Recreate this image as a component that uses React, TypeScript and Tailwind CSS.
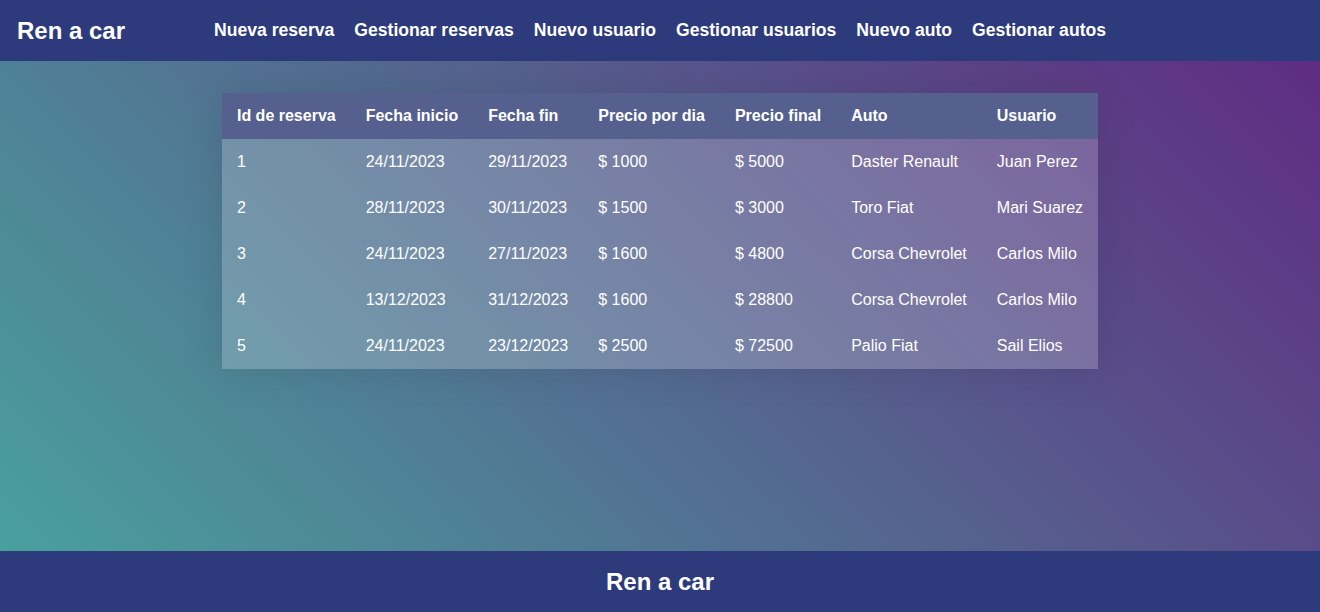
const links = [
  "Nueva reserva",
  "Gestionar reservas",
  "Nuevo usuario",
  "Gestionar usuarios",
  "Nuevo auto",
  "Gestionar autos",
];

const cols = ["Id de reserva", "Fecha inicio", "Fecha fin", "Precio por dia", "Precio final", "Auto", "Usuario"];

const rows = [
  ["1", "24/11/2023", "29/11/2023", "$ 1000", "$ 5000", "Daster Renault", "Juan Perez"],
  ["2", "28/11/2023", "30/11/2023", "$ 1500", "$ 3000", "Toro Fiat", "Mari Suarez"],
  ["3", "24/11/2023", "27/11/2023", "$ 1600", "$ 4800", "Corsa Chevrolet", "Carlos Milo"],
  ["4", "13/12/2023", "31/12/2023", "$ 1600", "$ 28800", "Corsa Chevrolet", "Carlos Milo"],
  ["5", "24/11/2023", "23/12/2023", "$ 2500", "$ 72500", "Palio Fiat", "Sail Elios"],
];

export default function App() {
  return (
    <div className="flex h-[612px] flex-col font-['Liberation_Sans',Arial,sans-serif] text-white">
      {/* header */}
      <header className="flex h-[61px] shrink-0 items-center bg-[#2d3a7c] px-[17px]">
        <div className="w-[197px] text-[24px] font-bold">Ren a car</div>
        <nav className="flex gap-[20px] text-[17.6px] font-bold">
          {links.map((l) => (
            <a key={l} href="#">
              {l}
            </a>
          ))}
        </nav>
      </header>

      {/* main */}
      <main className="flex flex-1 justify-center bg-[linear-gradient(45deg,#49a09d,#5f2c82)] pt-[32px]">
        <div className="self-start shadow-[0_0_40px_rgba(0,0,0,0.1)]">
          <table className="border-collapse text-left text-[16px]">
            <thead>
              <tr className="bg-[#55608f]">
                {cols.map((c) => (
                  <th key={c} className="px-[15px] py-[14px] leading-[18px] font-bold">
                    {c}
                  </th>
                ))}
              </tr>
            </thead>
            <tbody className="bg-white/20">
              {rows.map((r) => (
                <tr key={r[0]}>
                  {r.map((v, i) => (
                    <td key={i} className="px-[15px] py-[14px] leading-[18px]">
                      {v}
                    </td>
                  ))}
                </tr>
              ))}
            </tbody>
          </table>
        </div>
      </main>

      {/* footer */}
      <footer className="flex h-[61px] shrink-0 items-center justify-center bg-[#2d3a7c] text-[24px] font-bold">
        Ren a car
      </footer>
    </div>
  );
}
